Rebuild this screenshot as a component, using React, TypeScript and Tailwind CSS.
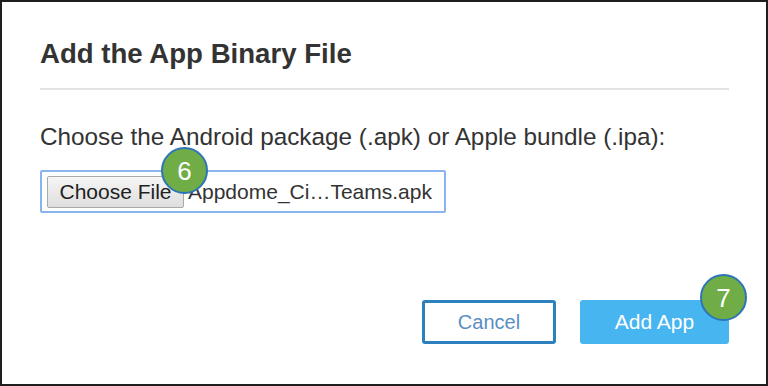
// Dialog: "Add the App Binary File" with step badges
function StepBadge({ n, className }: { n: number; className: string }) {
    return (
        <div
            className={`absolute flex h-[47px] w-[47px] items-center justify-center rounded-full border-2 border-[#2e75b6] bg-[#70ad47] text-[26px] leading-none text-white ${className}`}
        >
            {n}
        </div>
    );
}

export default function App() {
    return (
        <div
            className="relative h-[386px] w-[768px] border-2 border-[#1e1e1e] bg-white pl-[38px] pr-[37px] text-[#333]"
            style={{ fontFamily: '"Liberation Sans", Arial, sans-serif' }}
        >
            {/* header */}
            <h1 className="mt-[36px] text-[27.6px] font-bold leading-[32px] text-[#333]">
                Add the App Binary File
            </h1>
            <div className="mt-[18px] h-[2px] bg-[#e3e3e3]" />

            {/* file picker */}
            <p className="mt-[33px] text-[24.3px] leading-[28px] text-[#333]">
                Choose the Android package (.apk) or Apple bundle (.ipa):
            </p>
            <div className="relative mt-[19px] flex h-[43px] w-[406px] items-center rounded-[2px] border-2 border-[#8ab4f0] pl-[5px]">
                <div className="flex h-[32px] w-[137px] items-center justify-center rounded-[2px] border border-[#a9a9a9] bg-gradient-to-b from-[#f6f6f6] to-[#dedede] text-[21px] text-[#1f1f1f]">
                    Choose File
                </div>
                <span className="ml-[4px] text-[21px] text-[#333]">Appdome_Ci…Teams.apk</span>
                <StepBadge n={6} className="left-[119px] top-[-25px]" />
            </div>

            {/* actions */}
            <div className="relative mt-[87px] flex justify-end gap-[24px]">
                <button className="flex h-[44px] w-[134px] items-center justify-center rounded-[3px] border-[3px] border-[#2b80bd] bg-white text-[20px] text-[#5b8fc4]">
                    Cancel
                </button>
                <button className="flex h-[44px] w-[149px] items-center justify-center rounded-[3px] bg-[#47b5f0] text-[21px] text-white">
                    Add App
                </button>
                <StepBadge n={7} className="right-[-18px] top-[-26px]" />
            </div>
        </div>
    );
}
